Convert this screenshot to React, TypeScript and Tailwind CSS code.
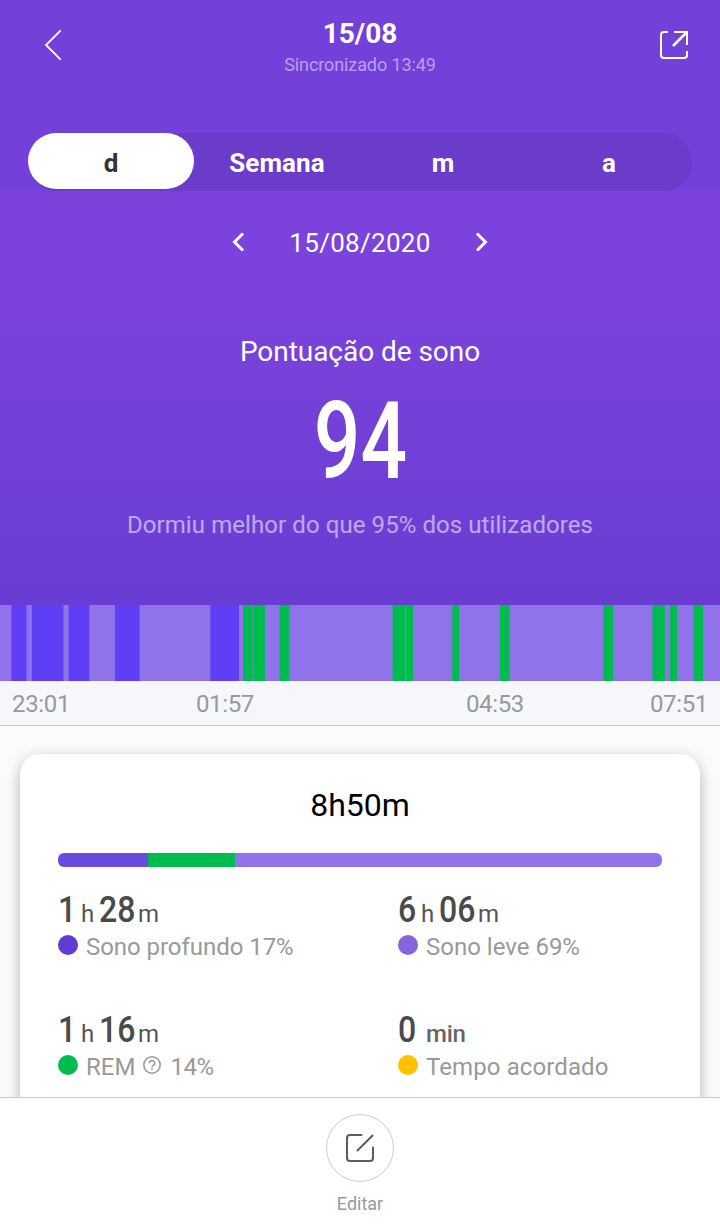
import type { ReactNode } from "react";

type Stage = "deep" | "rem";

const segments: { stage: Stage; start: number; end: number }[] = [
  { stage: "deep", start: 11.3, end: 26.5 },
  { stage: "deep", start: 31.8, end: 63.5 },
  { stage: "deep", start: 68.7, end: 89.3 },
  { stage: "deep", start: 115, end: 139.6 },
  { stage: "deep", start: 210.3, end: 239 },
  { stage: "rem", start: 243, end: 252.6 },
  { stage: "rem", start: 253.5, end: 265 },
  { stage: "rem", start: 279.5, end: 289.5 },
  { stage: "rem", start: 392.5, end: 405 },
  { stage: "rem", start: 406, end: 413 },
  { stage: "rem", start: 452.3, end: 459.2 },
  { stage: "rem", start: 500, end: 509.7 },
  { stage: "rem", start: 603.4, end: 613 },
  { stage: "rem", start: 652.5, end: 665 },
  { stage: "rem", start: 670, end: 677 },
  { stage: "rem", start: 693.4, end: 703 },
];

const stageFill: Record<Stage, string> = {
  deep: "#5f3ff6",
  rem: "#00bc4f",
};

function Header() {
  return (
    <header className="grid h-[133px] grid-cols-[1fr_auto_1fr] items-start">
      <button type="button" aria-label="Voltar" className="ml-9 mt-[27px] justify-self-start">
        <svg width="36" height="36" viewBox="0 0 36 36" fill="none" stroke="#fff" strokeWidth="1.8">
          <path d="M24.7 3.3 10 18l14.7 14.7" />
        </svg>
      </button>
      <div className="mt-[17px] text-center">
        <h1 className="text-[28px] leading-[33px] font-bold">15/08</h1>
        <p className="mt-1 text-[18px] leading-[22px] tracking-[-0.1px] text-white/50">
          Sincronizado 13:49
        </p>
      </div>
      <button type="button" aria-label="Partilhar" className="mr-7 mt-[27px] justify-self-end">
        <svg width="36" height="36" viewBox="0 0 36 36" fill="none" stroke="#fff" strokeWidth="2">
          <path d="M12 5H8a3 3 0 0 0-3 3v20a3 3 0 0 0 3 3h20a3 3 0 0 0 3-3v-4" />
          <path d="M18 5h13v13" />
          <path d="M30.5 5.5 17 19" strokeWidth="2.600" />
        </svg>
      </button>
    </header>
  );
}

function PeriodTabs() {
  const tabs = ["d", "Semana", "m", "a"];
  return (
    <nav className="mx-7 flex h-[58px] rounded-full bg-[#6a3cc9] text-[26px] font-bold tracking-[0.1px]">
      {tabs.map((tab, i) => (
        <button
          type="button"
          key={tab}
          className={`flex h-14 flex-1 items-center justify-center rounded-full pt-[5px] ${
            i === 0 ? "bg-white text-[#333]" : "text-white"
          }`}
        >
          {tab}
        </button>
      ))}
    </nav>
  );
}

function Score() {
  return (
    <section className="flex h-[414px] flex-col items-center bg-linear-to-b from-[#7b43dc] from-25% to-[#693dd2]">
      <div className="mt-9 flex h-8 w-[260px] items-center justify-between">
        <svg className="-mt-0.5" width="16" height="24" viewBox="0 0 16 24" fill="none" stroke="#fff" strokeWidth="3">
          <path d="M13 3.5 4.5 12l8.5 8.5" />
        </svg>
        <span className="text-[26px] tracking-[0.3px]">15/08/2020</span>
        <svg className="-mt-0.5" width="16" height="24" viewBox="0 0 16 24" fill="none" stroke="#fff" strokeWidth="3">
          <path d="M3 3.5 11.5 12 3 20.5" />
        </svg>
      </div>
      <h2 className="mt-[75px] text-[28px] leading-9 tracking-[-0.05px]">Pontuação de sono</h2>
      <p className="mt-[17px] scale-x-[0.76] text-[108px] leading-[108px] font-medium">94</p>
      <p className="mt-[14px] text-[24px] leading-8 tracking-[0.08px] text-white/55">
        Dormiu melhor do que 95% dos utilizadores
      </p>
    </section>
  );
}

function Timeline() {
  return (
    <section className="border-b border-[#c8c8c8] bg-[#f6f7fa]">
      <svg className="block" width="720" height="76" viewBox="0 0 720 76">
        <rect width="720" height="76" fill="#9073ea" />
        {segments.map((s) => (
          <rect key={s.start} x={s.start} width={s.end - s.start} height="76" fill={stageFill[s.stage]} />
        ))}
      </svg>
      <div className="flex h-11 items-center px-3 pt-[2px] text-[24px] tracking-[-0.35px] text-[#999]">
        <span className="w-[184px]">23:01</span>
        <span className="w-[270px]">01:57</span>
        <span className="w-[184px]">04:53</span>
        <span>07:51</span>
      </div>
    </section>
  );
}

function Num({ children }: { children: string }) {
  return (
    <span className={`text-[36px] font-medium text-[#4a4a4a] ${children.length > 1 ? "w-9" : "w-[18px]"}`}>
      <span className="inline-block origin-left scale-x-[0.89]">{children}</span>
    </span>
  );
}

function HoursMinutes({ h, m }: { h: string; m: string }) {
  return (
    <>
      <Num>{h}</Num>
      <span className="mx-[5px] w-[13px] text-[24px] text-[#555]">h</span>
      <Num>{m}</Num>
      <span className="ml-[3px] text-[24px] text-[#555]">m</span>
    </>
  );
}

function Stat({ dot, value, children }: { dot: string; value: ReactNode; children: ReactNode }) {
  return (
    <div className="h-[120px]">
      <div className="flex h-[42px] items-baseline leading-[42px]">{value}</div>
      <div className="flex h-8 items-center text-[24px] text-[#999]">
        <span className={`mr-2 -mt-[5px] size-5 rounded-full ${dot}`} />
        {children}
      </div>
    </div>
  );
}

function HelpIcon() {
  return (
    <svg className="ml-[7px] mr-2 -mt-[5px]" width="20" height="20" viewBox="0 0 20 20" fill="none" stroke="#999" strokeWidth="1.6">
      <circle cx="10" cy="10" r="8.2" />
      <path d="M7.3 8.200a2.700 2.500 0 1 1 4.200 2c-.9.600-1.500.9-1.500 2" />
      <path d="M10 13.300v1.700" />
    </svg>
  );
}

function SummaryCard() {
  return (
    <section className="mx-5 mt-7 h-[420px] rounded-[20px] bg-white px-[38px] shadow-[0_4px_14px_rgba(0,0,0,0.28)]">
      <h2 className="pt-[31px] text-center text-[32px] leading-10 text-black">8h50m</h2>
      <div className="mt-7 flex h-[14px] overflow-hidden rounded-[6px]">
        <span className="w-[90px] bg-[#6a4be0]" />
        <span className="w-[87px] bg-[#00bc4f]" />
        <span className="flex-1 bg-[#9073ea]" />
      </div>
      <div className="mt-[22px] grid grid-cols-[340px_1fr]">
        <Stat dot="bg-[#623cd2]" value={<HoursMinutes h="1" m="28" />}>
          <span className="tracking-[-0.05px]">Sono profundo 17%</span>
        </Stat>
        <Stat dot="bg-[#8465dc]" value={<HoursMinutes h="6" m="06" />}>
          Sono leve 69%
        </Stat>
        <Stat dot="bg-[#00bc4f]" value={<HoursMinutes h="1" m="16" />}>
          REM
          <HelpIcon />
          <span className="tracking-[-0.4px]">14%</span>
        </Stat>
        <Stat
          dot="bg-[#ffc000]"
          value={
            <>
              <Num>0</Num>
              <span className="ml-[10px] text-[24px] font-medium tracking-[-0.2px] text-[#666]">min</span>
            </>
          }
        >
          <span className="tracking-[0.1px]">Tempo acordado</span>
        </Stat>
      </div>
    </section>
  );
}

function Footer() {
  return (
    <footer className="flex h-[133px] shrink-0 flex-col items-center border-t border-[#c8c8c8] bg-white pt-4">
      <button
        type="button"
        aria-label="Editar"
        className="flex size-[68px] items-center justify-center rounded-full border border-[#ccc]"
      >
        <svg width="36" height="36" viewBox="0 0 36 36" fill="none" stroke="#5c5c5c" strokeWidth="2" strokeLinecap="round">
          <path d="M19.500 5H8a3 3 0 0 0-3 3v20a3 3 0 0 0 3 3h20a3 3 0 0 0 3-3V17.500" />
          <path d="M30.500 5.500 15.500 20.500" />
        </svg>
      </button>
      <span className="mt-[11px] text-[18px] leading-[22px] text-[#999]">Editar</span>
    </footer>
  );
}

export default function App() {
  return (
    <div className="flex h-[1230px] w-[720px] flex-col overflow-hidden bg-[#fbfbfb] font-[Roboto,sans-serif]">
      <div className="bg-[#7341d9] text-white">
        <Header />
        <PeriodTabs />
        <Score />
      </div>
      <Timeline />
      <main className="min-h-0 flex-1 overflow-hidden">
        <SummaryCard />
      </main>
      <Footer />
    </div>
  );
}
